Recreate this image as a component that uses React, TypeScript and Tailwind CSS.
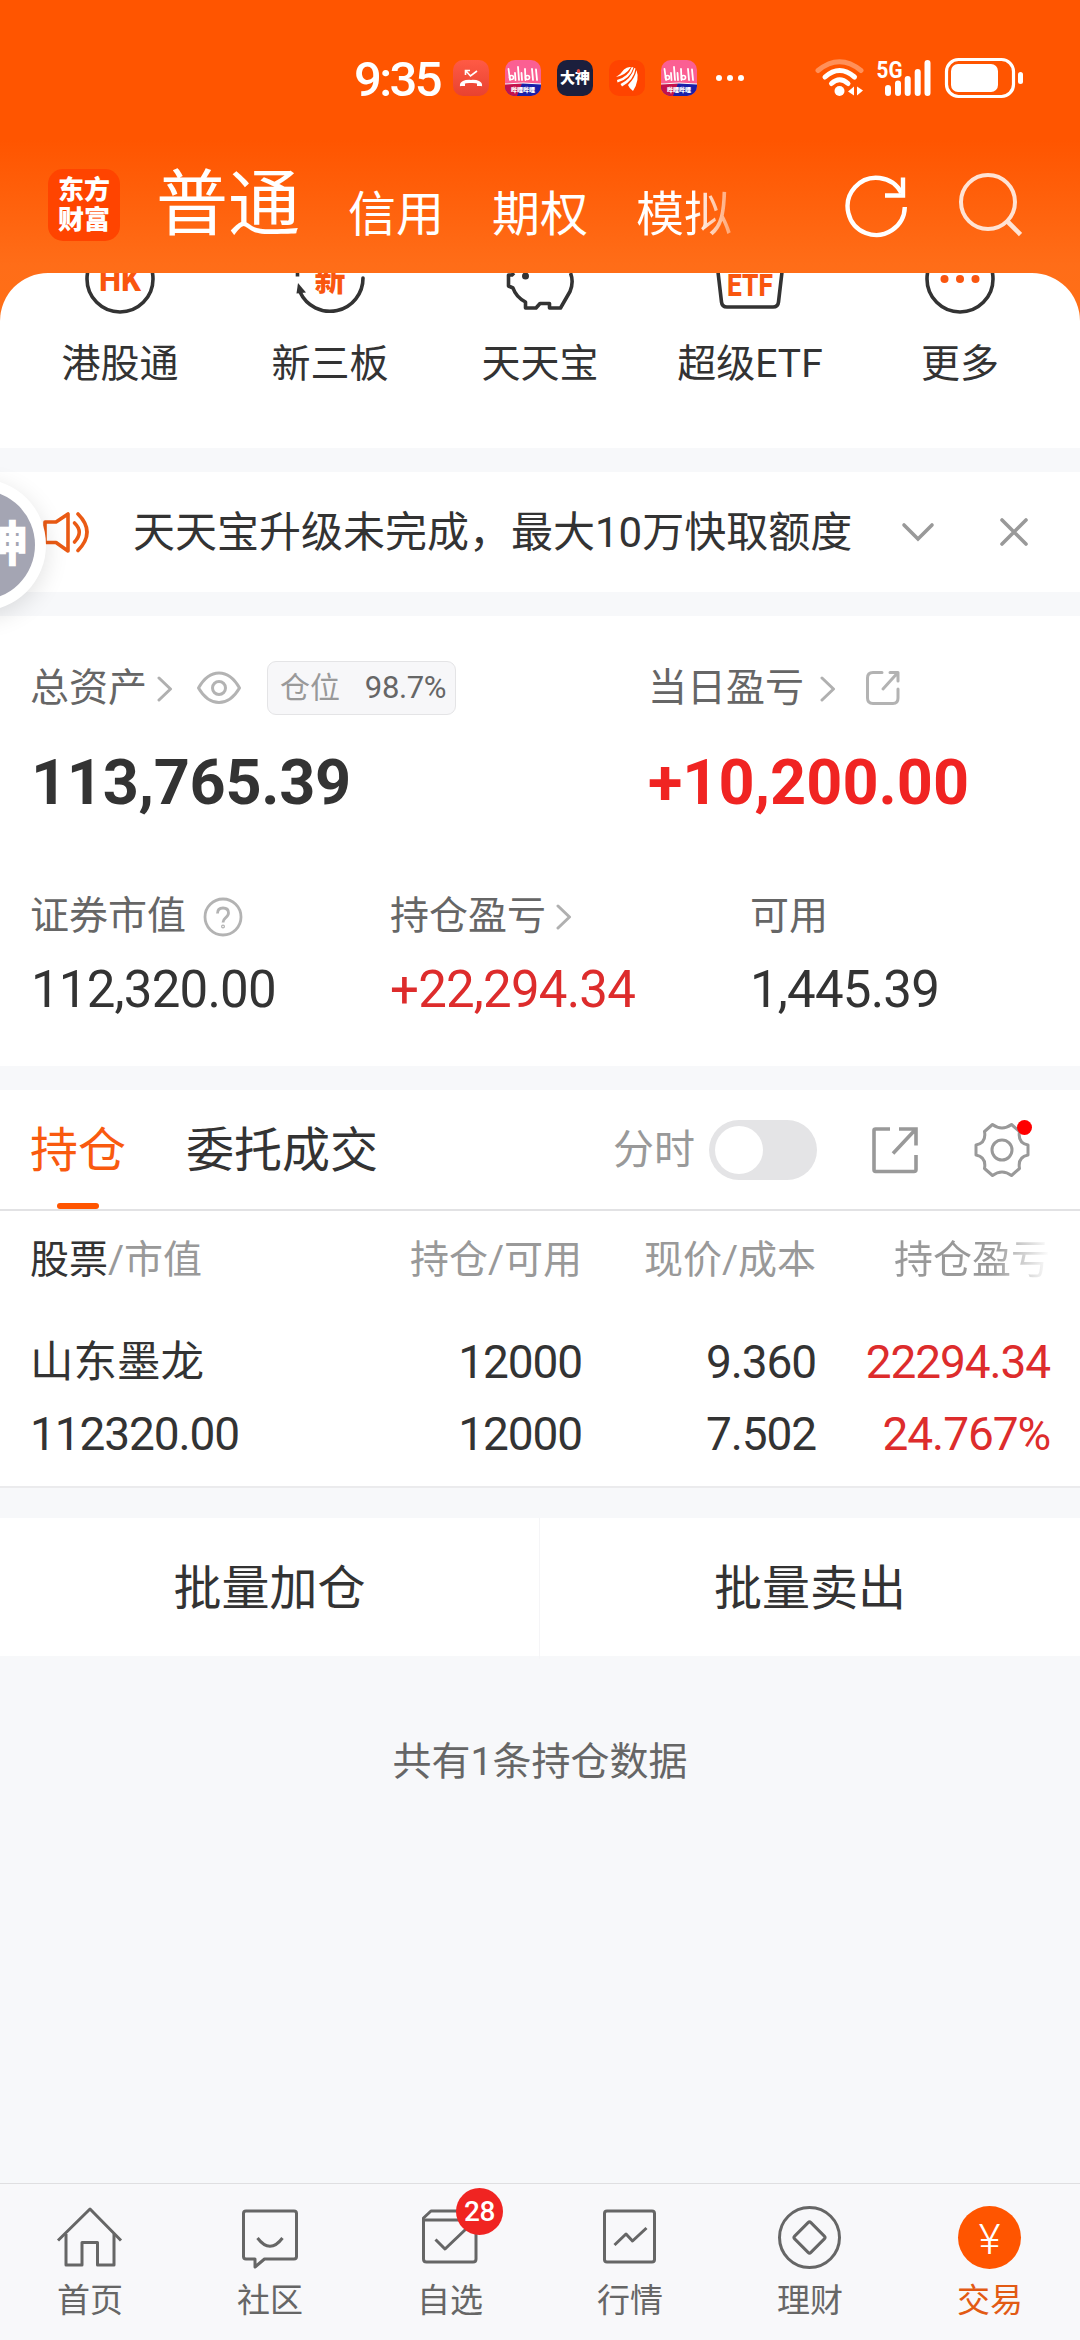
import React from 'react';
import { clsx } from 'clsx';

interface IconProps {
  className?: string;
}

interface Shortcut {
  label: string;
  icon: React.ReactNode;
}

interface NavItem {
  label: string;
  icon: React.ReactNode;
  badge?: string;
  active?: boolean;
}

const ChevronRight = ({ className }: IconProps) => (
  <svg viewBox="0 0 16 26" className={clsx('w-4 h-[26px] shrink-0', className)} fill="none" stroke="#b0b0b0" strokeWidth="3" strokeLinecap="round" strokeLinejoin="round">
    <path d="M2 2 L13.5 13 L2 24" />
  </svg>
);

const ShareSmall = ({ className }: IconProps) => (
  <svg viewBox="0 0 36 36" className={clsx('w-9 h-9 shrink-0', className)} fill="none" stroke="#b3b3b3" strokeWidth="3" strokeLinecap="round" strokeLinejoin="round">
    <path d="M17 2.5 H8 Q2.500 2.500 2.500 8 V28 Q2.500 33.500 8 33.500 H28 Q33 33.500 33 28 V19" />
    <path d="M25 2.500 H33 V11 M32 3.500 L18 19" />
  </svg>
);

const ShareLarge = ({ className }: IconProps) => (
  <svg viewBox="0 0 48 48" className={clsx('w-12 h-12 shrink-0', className)} fill="none" stroke="#999" strokeWidth="3.600">
    <path d="M19 3 H4.500 Q3 3 3 4.500 V43.500 Q3 45.500 4.500 45.500 H43 Q45 45.500 45 43.500 V29" />
    <path d="M28 3 H45 V19.500 M44 4 L22 27.500" />
  </svg>
);

// --- status bar -------------------------------------------------------------

const BiliIcon = () => (
  <div className="w-9 h-9 rounded-[10px] overflow-hidden bg-[#fb5f93]">
    <svg viewBox="0 0 36 36" className="w-9 h-9">
      <g fill="none" stroke="#fff" strokeLinecap="round">
        <path d="M3.500 9 L5 20 M13 7 L14 20 M20 9 L20.500 20 M27 9 L28 20 M31 9.500 L32 20" strokeWidth="1.800" />
        <path d="M10 13 L10.500 20 M16.500 13 L17 20" strokeWidth="1.800" />
        <circle cx="6.500" cy="17.500" r="2" strokeWidth="1.600" />
        <circle cx="22.500" cy="17.500" r="2" strokeWidth="1.600" />
      </g>
      <path d="M0 24 Q18 22 36 24 V36 H0 Z" fill="#1a1fa8" />
      <path d="M0 24 Q9 22.500 17 23.500 L12 36 H0 Z" fill="#c4124c" />
      <path d="M0 24 Q18 22 36 24" stroke="#fff" strokeWidth="1" fill="none" />
      <text x="18" y="32" textAnchor="middle" fontSize="6" fontWeight="900" fill="#fff">哔哩哔哩</text>
    </svg>
  </div>
);

const StatusBar = () => (
  <div className="h-[156px] flex items-center pl-[354px] text-white">
    <span className="w-[99px] pt-0.5 text-[49px] leading-none font-medium tracking-[-2.6px]">9:35</span>
    <div className="flex items-center gap-4">
      <div className="w-9 h-9 rounded-[10px] bg-gradient-to-b from-[#ff5a45] to-[#e84230]">
        <svg viewBox="0 0 36 36" className="w-9 h-9" fill="none" stroke="#fff">
          <path d="M12.500 15 V10.500 H17 M13 11 L17.500 16 L24 11" strokeWidth="1.600" />
          <path d="M8.500 26 Q8 21 18 21.500 Q28 21 27.500 26 M8 24.500 H12 M24 24.500 H28" strokeWidth="3.200" />
        </svg>
      </div>
      <BiliIcon />
      <div className="w-9 h-9 rounded-[10px] bg-[#1b1f3d] flex items-center justify-center relative">
        <span className="text-[15px] leading-none font-black">大神</span>
        <span className="absolute right-[13px] top-[9px] w-[3px] h-[4px] rounded-full bg-[#e5483c]" />
      </div>
      <div className="w-9 h-9 rounded-[10px] bg-[#ff4400]">
        <svg viewBox="0 0 36 36" className="w-9 h-9" fill="#fff">
          <path d="M7 17 Q17 15 22 7 Q18 6.500 15 9.500 Q12 14 7 17 Z" />
          <path d="M8.500 22.500 Q21 19 24.500 7.500 L22.800 7 Q19 17 8 20 Z" />
          <path d="M13 26.500 Q25 20 26.500 8.500 L25.300 8 Q22 19 11.500 24 Z" />
          <path d="M24 31 Q20 28 19 25 Q26 18 27.500 10 Q31 20 24 31 Z" />
        </svg>
      </div>
      <BiliIcon />
    </div>
    <div className="flex gap-[5px] ml-[19px]">
      <span className="w-1.5 h-1.5 rounded-full bg-white" />
      <span className="w-1.5 h-1.5 rounded-full bg-white" />
      <span className="w-1.5 h-1.5 rounded-full bg-white" />
    </div>
    <svg viewBox="0 0 210 44" className="w-[210px] h-11 ml-[70px]" fill="none" stroke="#fff" strokeLinecap="round">
      <path d="M4 14.500 Q25.500 -3 47 14.500" strokeWidth="5" opacity="0.350" />
      <path d="M11 21 Q25.500 8 40.500 21" strokeWidth="5" />
      <path d="M17.500 27.500 Q25.500 20 34 27.500" strokeWidth="5" />
      <circle cx="25.500" cy="35" r="5" fill="#fff" stroke="none" />
      <path d="M40 30.500 V39.500 L34 35.500 Z M43 30.500 V39.500 L49 34.500 Z" fill="#fff" stroke="none" />
      <text x="62.500" y="21.500" fontSize="24" fontWeight="700" textLength="26" lengthAdjust="spacingAndGlyphs" fill="#fff" stroke="none">5G</text>
      <path d="M74 32 V37 M84 27.500 V37 M93.700 23 V37 M103.700 16 V37 M113.500 7 V37" strokeWidth="6" />
      <rect x="132.500" y="3.500" width="67" height="37" rx="12" strokeWidth="3.200" />
      <rect x="137" y="8" width="47" height="28" rx="7" fill="#fff" stroke="none" />
      <rect x="204" y="16" width="5" height="12" rx="2.500" fill="#fff" stroke="none" />
    </svg>
  </div>
);

// --- header -----------------------------------------------------------------

const Header = () => (
  <div className="h-[117px] pl-12 flex items-start text-white">
    <div className="mt-[13px] w-[72px] h-[72px] rounded-[15px] bg-[#ff4400] flex flex-col items-center justify-center text-[26px] leading-[30px] font-black">
      <span>东方</span>
      <span>财富</span>
    </div>
    <div className="ml-9 mt-[15px] w-[580px] h-[72px] flex items-end gap-12 whitespace-nowrap text-5xl leading-[56px]">
      <span className="text-[72px] leading-[76px]">普通</span>
      <span>信用</span>
      <span>期权</span>
      <span className="bg-gradient-to-r from-white from-60% to-white/40 bg-clip-text text-transparent">模拟</span>
    </div>
    <svg viewBox="0 0 66 66" className="mt-[17px] ml-[107px] w-[66px] h-[66px] shrink-0" fill="none" stroke="#fff" strokeWidth="4.400">
      <path d="M61.800 34 A28.600 28.600 0 1 1 58.500 20" />
      <path d="M60 4.500 V22.500 H42" />
    </svg>
    <svg viewBox="0 0 66 66" className="mt-[17px] ml-[47px] w-[66px] h-[66px] shrink-0" fill="none" stroke="#ffe3d4" strokeWidth="4">
      <circle cx="32" cy="29" r="27" />
      <path d="M51 48 L64.500 61.500" strokeWidth="4.600" />
    </svg>
  </div>
);

const shortcuts: Shortcut[] = [
  {
    label: '港股通',
    icon: (
      <>
        <circle cx="40" cy="6" r="33" />
        <text x="40" y="17.500" textAnchor="middle" fontSize="33" fontWeight="800" textLength="42" lengthAdjust="spacingAndGlyphs" fill="#f9560f" stroke="none">HK</text>
      </>
    ),
  },
  {
    label: '新三板',
    icon: (
      <>
        <path d="M73 5 A33 33 0 0 1 10 19" strokeLinecap="round" />
        <path d="M7.500 -1 V3.500" />
        <path d="M8 10 L16 19.500 L6.500 20.500 Z" fill="#333" stroke="none" />
        <text x="40" y="17.500" textAnchor="middle" fontSize="31" fontWeight="900" fill="#f9560f" stroke="none">新</text>
      </>
    ),
  },
  {
    label: '天天宝',
    icon: (
      <>
        <path d="M14 0 L12 2 L8.500 2 V13 L13 15 Q16 24 25.500 29 V35 H36 L40 30.500 H49.500 V35 H60.500 L70 18.500 Q74 9 70.500 0" />
        <circle cx="25.500" cy="3" r="3.500" fill="#333" stroke="none" />
      </>
    ),
  },
  {
    label: '超级ETF',
    icon: (
      <>
        <path d="M8 -1 L11.500 29 Q12 34 17 34 H63 Q68 34 68.500 29 L72 -1" />
        <text x="40" y="23" textAnchor="middle" fontSize="31" fontWeight="800" textLength="46" lengthAdjust="spacingAndGlyphs" fill="#f9560f" stroke="none">ETF</text>
      </>
    ),
  },
  {
    label: '更多',
    icon: (
      <>
        <circle cx="40" cy="6" r="33" />
        <g fill="#f9560f" stroke="none">
          <circle cx="24.500" cy="6" r="4" />
          <circle cx="40" cy="6" r="4" />
          <circle cx="55.500" cy="6" r="4" />
        </g>
      </>
    ),
  },
];

const Shortcuts = () => (
  <div className="h-[175px] bg-white rounded-t-[48px] px-[15px] grid grid-cols-5 overflow-hidden">
    {shortcuts.map(item => (
      <div key={item.label} className="flex flex-col items-center">
        <svg viewBox="0 0 80 44" className="w-20 h-11" fill="none" stroke="#333" strokeWidth="3.600" strokeLinejoin="round">
          {item.icon}
        </svg>
        <span className="mt-[23px] text-[39px] leading-[48px] text-[#333]">{item.label}</span>
      </div>
    ))}
  </div>
);

const Notice = () => (
  <div className="h-[120px] bg-white pl-[42px] pr-[50px] flex items-center relative">
    <svg viewBox="0 0 50 42" className="w-[50px] h-[42px] shrink-0" fill="none" stroke="#ea5a14" strokeWidth="3.600" strokeLinejoin="round" strokeLinecap="round">
      <path d="M3 11 H14 L26 3 V40 L14 31.500 H3 Z" />
      <path d="M32.500 12 Q42 21 32.500 31" />
      <path d="M36 3 Q54 21 36 39.500" />
    </svg>
    <span className="ml-[41px] pt-[2px] w-[720px] text-[42px] leading-[50px] text-[#333] whitespace-nowrap">天天宝升级未完成，最大10万快取额度</span>
    <svg viewBox="0 0 34 20" className="ml-12 w-[34px] h-5 shrink-0" fill="none" stroke="#999" strokeWidth="3.600" strokeLinecap="round">
      <path d="M3 3 L17 17 L31 3" />
    </svg>
    <svg viewBox="0 0 30 30" className="ml-16 w-[30px] h-[30px] shrink-0" fill="none" stroke="#999" strokeWidth="3.600" strokeLinecap="round">
      <path d="M3 3 L27 27 M27 3 L3 27" />
    </svg>
    {/* floating helper ball docked on the left edge */}
    <div className="absolute z-10 -left-[86px] top-[7px] w-[132px] h-[132px] rounded-full bg-white shadow-[0_6px_24px_rgba(0,0,0,0.12)] flex items-center justify-center">
      <div className="w-[110px] h-[110px] rounded-full bg-[#a4a5b3] flex items-center justify-center text-white text-[48px] leading-none font-black whitespace-nowrap">
        <span>大神</span>
      </div>
    </div>
  </div>
);

const Assets = () => (
  <div className="h-[450px] bg-white px-[30px] pt-[45px] text-[39px] leading-[50px] text-[#666]">
    <div className="flex">
      <div className="w-[618px]">
        <div className="h-[54px] flex items-center">
          <span>总资产</span>
          <ChevronRight className="ml-[10px] mt-[2px]" />
          <svg viewBox="0 0 46 34" className="ml-[23px] w-[46px] h-[34px]" fill="none" stroke="#b3b3b3" strokeWidth="3">
            <path d="M2.500 17 Q11 2 23 2 Q35 2 43.500 17 Q35 31.500 23 31.500 Q11 31.500 2.500 17 Z" strokeLinejoin="round" />
            <circle cx="23" cy="17" r="6.500" />
          </svg>
          <div className="ml-[25px] w-[189px] h-[54px] rounded-[9px] border border-[#e4e4e6] bg-[#f7f7f9] flex items-center justify-between pl-3 pr-[9px] text-[30px]">
            <span className="text-[#999]">仓位</span>
            <span className="text-[31px] tracking-[-0.4px]">98.7%</span>
          </div>
        </div>
        <div className="mt-[33px] pl-px text-[63px] leading-[70px] font-bold tracking-[-0.3px] text-[#333]">113,765.39</div>
      </div>
      <div>
        <div className="h-[54px] flex items-center">
          <span>当日盈亏</span>
          <ChevronRight className="ml-[16px] mt-[2px]" />
          <ShareSmall className="ml-[29px]" />
        </div>
        <div className="mt-[33px] text-[63px] leading-[70px] font-bold text-[#f02422]">+10,200.00</div>
      </div>
    </div>
    <div className="mt-[73px] grid grid-cols-[360px_360px_1fr]">
      <div>
        <div className="h-[50px] flex items-center">
          <span>证券市值</span>
          <svg viewBox="0 0 40 40" className="ml-[17px] mt-[2px] w-10 h-10" fill="none" stroke="#b3b3b3" strokeWidth="2.800">
            <circle cx="20" cy="20" r="18" />
            <path d="M14.500 16.500 Q14.500 11 20 11 Q25.500 11 25.500 16 Q25.500 18.500 22.500 20.800 Q20 22.800 20 25.500" />
            <circle cx="20" cy="29.500" r="0.600" />
          </svg>
        </div>
        <div className="mt-6 pl-px text-[51px] leading-[50px] tracking-[-0.8px] text-[#333]">112,320.00</div>
      </div>
      <div>
        <div className="h-[50px] flex items-center">
          <span>持仓盈亏</span>
          <ChevronRight className="ml-[10px] mt-[2px]" />
        </div>
        <div className="mt-6 text-[51px] leading-[50px] tracking-[-0.8px] text-[#dd2c2c]">+22,294.34</div>
      </div>
      <div>
        <div className="h-[50px] flex items-center">可用</div>
        <div className="mt-6 text-[51px] leading-[50px] tracking-[-0.8px] text-[#333]">1,445.39</div>
      </div>
    </div>
  </div>
);

const PositionTabs = () => (
  <div className="h-[121px] border-b-[2px] border-[#e2e2e4] bg-white px-[30px] flex items-center text-5xl">
    <div className="h-full w-24 flex flex-col items-center text-[#f95a0f]">
      <span className="flex-1 flex items-center pt-[3px]">持仓</span>
      <span className="-mt-1.5 w-[42px] h-1.5 rounded-full bg-[#ff5500]" />
    </div>
    <span className="ml-[60px] pt-[3px] text-[#333]">委托成交</span>
    <span className="ml-auto pt-[2px] text-[41px] text-[#999]">分时</span>
    <div className="ml-3.5 w-[108px] h-[60px] rounded-full bg-[#e4e4e6] p-1.5">
      <div className="w-12 h-12 rounded-full bg-white" />
    </div>
    <ShareLarge className="ml-[54px]" />
    <div className="relative ml-[53px] mr-[18px]">
      <svg viewBox="-30 -30 60 60" className="w-[60px] h-[60px]" fill="none" stroke="#999" strokeWidth="3" strokeLinejoin="round">
        <path d="M-17.500 -18.500 L-9.500 -25.500 Q0 -18.500 9.500 -25.500 L17.500 -18.500 Q15.500 -7 26 -5 V5 Q15.500 7 17.500 18.500 L9.500 25.500 Q0 18.500 -9.500 25.500 L-17.500 18.500 Q-15.500 7 -26 5 V-5 Q-15.500 -7 -17.500 -18.500 Z" />
        <circle r="10" />
      </svg>
      <span className="absolute top-0 right-0 w-[15px] h-[15px] rounded-full bg-[#ff0000]" />
    </div>
  </div>
);

const columns = 'grid grid-cols-[318px_234px_234px_234px] px-[30px]';

const Positions = () => (
  <div className="h-[277px] border-b-[2px] border-[#ebebed] bg-white text-right">
    <div className={clsx(columns, 'h-[98px] items-center pt-px text-[39px] text-[#999]')}>
      <span className="text-left"><span className="text-[#333]">股票</span>/市值</span>
      <span>持仓/可用</span>
      <span>现价/成本</span>
      <span className="bg-gradient-to-r from-[#999] from-75% to-white bg-clip-text text-transparent">持仓盈亏</span>
    </div>
    <div className={clsx(columns, 'h-[106px] items-center pt-[1px] text-[46px] tracking-[-1.1px] text-[#333]')}>
      <span className="text-left text-[43.5px] tracking-normal">山东墨龙</span>
      <span>12000</span>
      <span>9.360</span>
      <span className="text-[#dd2c2c]">22294.34</span>
    </div>
    <div className={clsx(columns, 'h-[38px] items-center text-[46px] leading-[38px] tracking-[-1.1px] text-[#333]')}>
      <span className="text-left">112320.00</span>
      <span>12000</span>
      <span>7.502</span>
      <span className="text-[#dd2c2c]">24.767%</span>
    </div>
  </div>
);

const navItems: NavItem[] = [
  {
    label: '首页',
    icon: (
      <>
        <path d="M4 35.500 L36 4 L67 35.500" />
        <path d="M12 29 V60 H28 V37.500 H43.500 V60 H60 V29" />
      </>
    ),
  },
  {
    label: '社区',
    icon: (
      <>
        <path d="M12 6 H60 Q62.500 6 62.500 8.500 V51.500 Q62.500 54 60 54 H30.500 L21 62 V54 H12 Q9.500 54 9.500 51.500 V8.500 Q9.500 6 12 6 Z" />
        <path d="M23.500 33 Q36 49.500 48.500 33" />
      </>
    ),
  },
  {
    label: '自选',
    badge: '28',
    icon: (
      <>
        <path d="M9.500 15 H62 V54 Q62 57 59 57 H12.500 Q9.500 57 9.500 54 Z" />
        <path d="M9.500 15 V13 L17 6 H55 L62 13 V15" />
        <path d="M21.500 34.500 L31 44 L52 24" />
      </>
    ),
  },
  {
    label: '行情',
    icon: (
      <>
        <rect x="10.500" y="6" width="50" height="51" rx="2.500" />
        <path d="M20.500 40 L32 29 L38.500 36 L52.500 23" />
      </>
    ),
  },
  {
    label: '理财',
    icon: (
      <>
        <circle cx="35.500" cy="32.500" r="30" />
        <rect x="24" y="21" width="23" height="23" rx="2" transform="rotate(45 35.500 32.500)" />
      </>
    ),
  },
  {
    label: '交易',
    active: true,
    icon: (
      <>
        <circle cx="35.500" cy="32.500" r="31.500" fill="#ff5500" stroke="none" />
        <text x="35.500" y="49" textAnchor="middle" fontSize="42" fontWeight="300" fill="#fff" stroke="none">¥</text>
      </>
    ),
  },
];

const BottomNav = () => (
  <div className="h-[157px] border-t border-[#dfdfe1] bg-[#f8f8fa] grid grid-cols-6">
    {navItems.map(item => (
      <div key={item.label} className="relative flex flex-col items-center pt-[21px]">
        <svg viewBox="0 0 72 66" className="w-[72px] h-[66px]" fill="none" stroke="#666" strokeWidth="3" strokeLinejoin="round">
          {item.icon}
        </svg>
        <span className={clsx('mt-2 text-[33px] leading-[44px]', item.active ? 'text-[#e25a14]' : 'text-[#666]')}>
          {item.label}
        </span>
        {item.badge && (
          <span className="absolute left-[96px] top-[4px] w-[47px] h-[47px] rounded-full bg-[#f02422] text-white text-[28px] font-medium tracking-[-0.5px] flex items-center justify-center">
            {item.badge}
          </span>
        )}
      </div>
    ))}
  </div>
);

export default function App() {
  return (
    <div className="w-[1080px] h-[2340px] overflow-hidden flex flex-col bg-[#f7f8fa] font-[Roboto,'Noto_Sans_CJK_SC',sans-serif]">
      <div className="bg-linear-[180deg,#ff5500_140px,#ff6d18_265px,#ff7016_330px]">
        <StatusBar />
        <Header />
        <Shortcuts />
      </div>
      <div className="mt-6">
        <Notice />
      </div>
      <div className="mt-6">
        <Assets />
      </div>
      <div className="mt-6">
        <PositionTabs />
        <Positions />
      </div>
      <div className="mt-[30px] h-[138px] bg-white grid grid-cols-2 text-center text-5xl leading-[141px] text-[#333]">
        <span className="border-r border-[#f5f5f7]">批量加仓</span>
        <span>批量卖出</span>
      </div>
      <div className="mt-[81px] text-center text-[39px] leading-[50px] text-[#666]">共有1条持仓数据</div>
      <div className="mt-auto">
        <BottomNav />
      </div>
    </div>
  );
}
